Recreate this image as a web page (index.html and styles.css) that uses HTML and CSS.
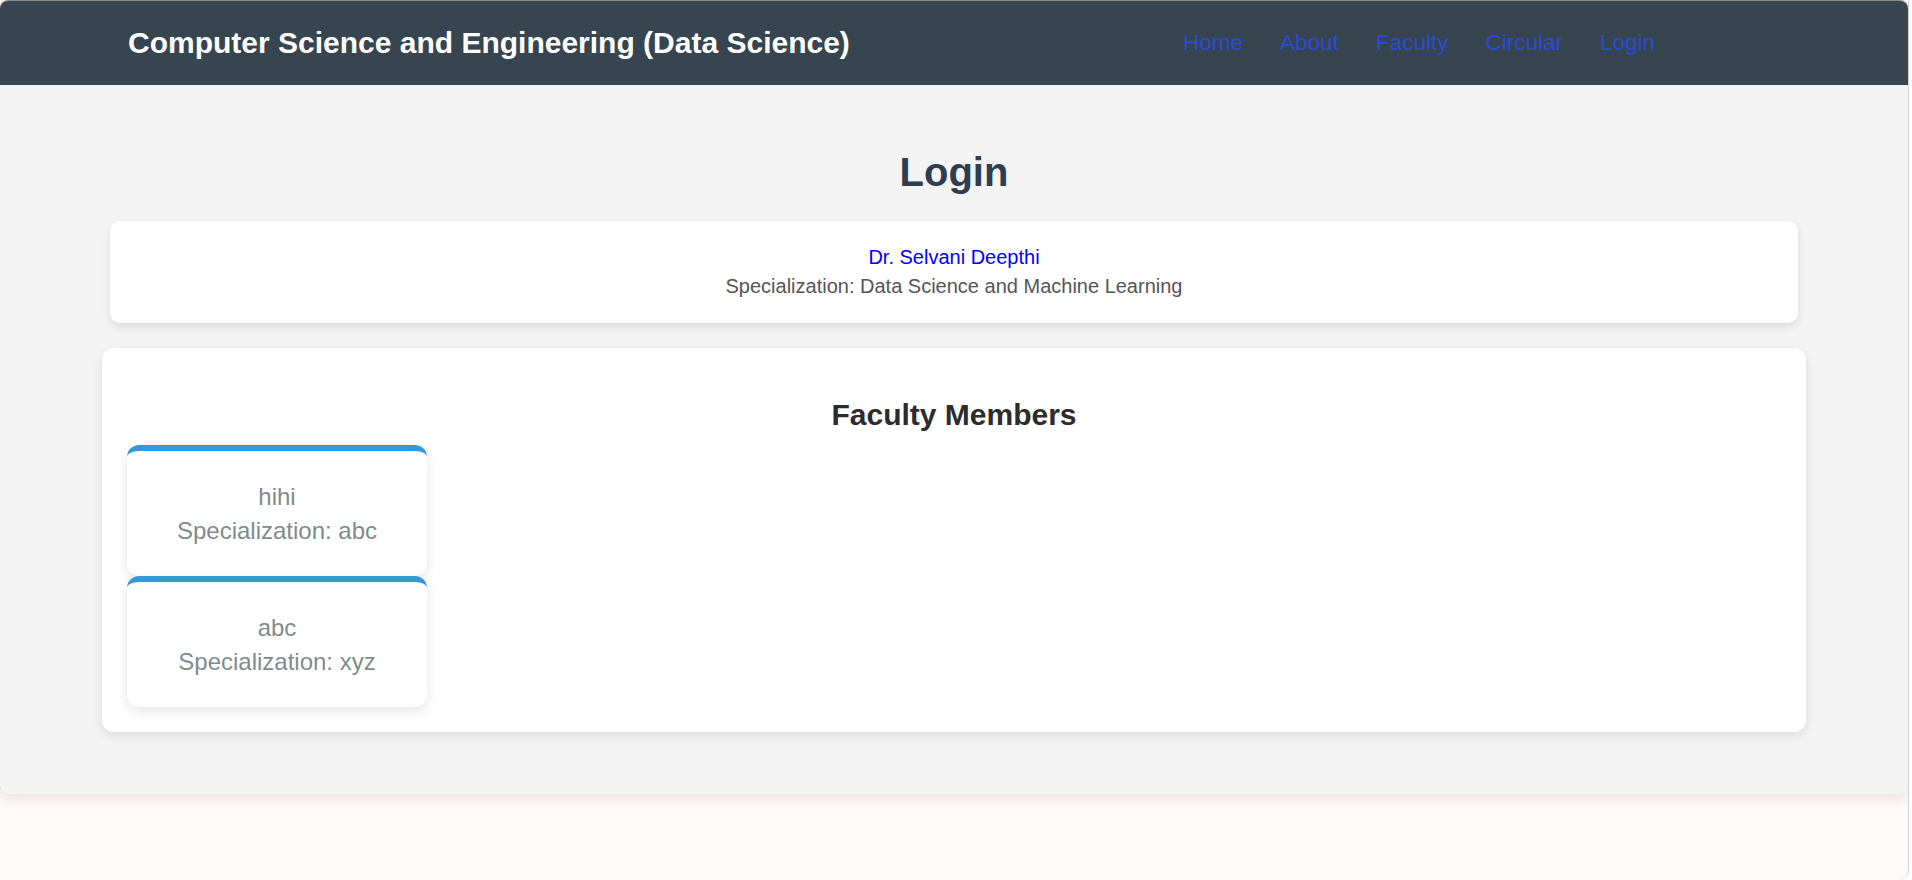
FILE: index.html
```html
<!DOCTYPE html>
<html lang="en">
<head>
<meta charset="utf-8">
<title>Login - CSE (Data Science)</title>
<link rel="stylesheet" href="styles.css">
</head>
<body>
<div class="window">
  <div class="container">
    <header class="navbar">
      <div class="brand">Computer Science and Engineering (Data Science)</div>
      <nav class="nav-links">
        <a href="#">Home</a>
        <a href="#">About</a>
        <a href="#">Faculty</a>
        <a href="#">Circular</a>
        <a href="#">Login</a>
      </nav>
    </header>
    <main class="main">
      <h1 class="page-title">Login</h1>
      <div class="info-card">
        <a class="info-name" href="#">Dr. Selvani Deepthi</a>
        <div class="info-spec">Specialization: Data Science and Machine Learning</div>
      </div>
      <section class="faculty-section">
        <h2 class="section-title">Faculty Members</h2>
        <div class="faculty-list">
          <div class="faculty-card">
            <div class="faculty-name">hihi</div>
            <div class="faculty-spec">Specialization: abc</div>
          </div>
          <div class="faculty-card">
            <div class="faculty-name">abc</div>
            <div class="faculty-spec">Specialization: xyz</div>
          </div>
        </div>
      </section>
    </main>
  </div>
</div>
</body>
</html>
```

FILE: styles.css
```css
html, body {
  margin: 0;
  padding: 0;
  background: #ffffff;
}

body {
  font-family: "Liberation Sans", Arial, sans-serif;
}

.window {
  width: 1909px;
  height: 880px;
  box-sizing: border-box;
  background: #fdf9f8;
  border-right: 1px solid #d4d4d4;
  border-bottom-right-radius: 10px;
  padding-top: 1px;
  overflow: hidden;
}

.container {
  width: 1908px;
  background: #f4f4f4;
  border-radius: 8px;
  box-shadow: 0 -1px 0 #8c8c8c, 0 4px 12px rgba(80, 50, 50, 0.12);
}

.navbar {
  height: 84px;
  background: #36454f;
  border-radius: 8px 8px 0 0;
  display: flex;
  align-items: center;
  justify-content: space-between;
  padding: 0 253px 0 128px;
}

.brand {
  color: #ffffff;
  font-size: 30px;
  font-weight: bold;
  line-height: 34px;
}

.nav-links {
  display: flex;
  gap: 37px;
}

.nav-links a {
  color: #2d4bd6;
  text-decoration: none;
  font-size: 22.5px;
  line-height: 26px;
}

.main {
  padding: 37px 0 62px;
}

.page-title {
  margin: 27px 0 26px;
  text-align: center;
  font-size: 40px;
  line-height: 46px;
  color: #2c3e50;
}

.info-card {
  margin: 0 110px;
  background: #ffffff;
  border-radius: 10px;
  padding: 25px;
  text-align: center;
  box-shadow: 0 4px 10px rgba(0, 0, 0, 0.1);
}

.info-name {
  display: block;
  color: #0000ff;
  text-decoration: none;
  font-size: 20px;
  line-height: 23px;
  margin-bottom: 6px;
}

.info-spec {
  color: #555555;
  font-size: 20px;
  line-height: 23px;
}

.faculty-section {
  margin: 25px 102px 0;
  background: #ffffff;
  border-radius: 12px;
  padding: 25px;
  box-shadow: 0 4px 12px rgba(0, 0, 0, 0.1);
}

.section-title {
  margin: 25px 0 13px;
  text-align: center;
  font-size: 30px;
  line-height: 34px;
  color: #2c2c2c;
}

.faculty-list {
  display: flex;
  flex-direction: column;
  align-items: flex-start;
}

.faculty-card {
  width: 300px;
  box-sizing: border-box;
  background: #ffffff;
  border-top: 6px solid #3498db;
  border-radius: 12px;
  padding: 32px 10px 31px;
  text-align: center;
  color: #7f8c8d;
  font-size: 24px;
  line-height: 28px;
  box-shadow: 0 4px 12px rgba(0, 0, 0, 0.1);
}

.faculty-name {
  margin-bottom: 6px;
}
```
